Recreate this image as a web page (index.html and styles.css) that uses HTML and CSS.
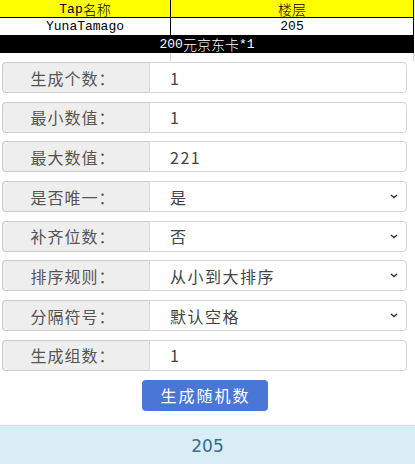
FILE: index.html
```html
<!DOCTYPE html>
<html lang="zh-CN">
<head>
<meta charset="utf-8">
<title>随机数生成器</title>
<link rel="stylesheet" href="styles.css">
</head>
<body>
<div class="sheet">
  <div class="cell head first">Tap<span class="han">名称</span></div>
  <div class="cell head"><span class="han">楼层</span></div>
  <div class="cell first">YunaTamago</div>
  <div class="cell">205</div>
  <div class="cell prize">200<span class="han">元京东卡</span>*1</div>
  <div class="cell blank first"></div>
  <div class="cell blank"></div>
</div>

<form class="generator">
  <div class="field">
    <span class="label">生成个数：</span>
    <div class="control">1</div>
  </div>
  <div class="field">
    <span class="label">最小数值：</span>
    <div class="control">1</div>
  </div>
  <div class="field">
    <span class="label">最大数值：</span>
    <div class="control">221</div>
  </div>
  <div class="field">
    <span class="label">是否唯一：</span>
    <div class="control select">是<svg class="caret" viewBox="0 0 8 5"><path d="M1 1l3 2.6L7 1"/></svg></div>
  </div>
  <div class="field">
    <span class="label">补齐位数：</span>
    <div class="control select">否<svg class="caret" viewBox="0 0 8 5"><path d="M1 1l3 2.6L7 1"/></svg></div>
  </div>
  <div class="field">
    <span class="label">排序规则：</span>
    <div class="control select">从小到大排序<svg class="caret" viewBox="0 0 8 5"><path d="M1 1l3 2.6L7 1"/></svg></div>
  </div>
  <div class="field">
    <span class="label">分隔符号：</span>
    <div class="control select">默认空格<svg class="caret" viewBox="0 0 8 5"><path d="M1 1l3 2.6L7 1"/></svg></div>
  </div>
  <div class="field">
    <span class="label">生成组数：</span>
    <div class="control">1</div>
  </div>
  <div class="actions">
    <button type="button" class="btn">生成随机数</button>
  </div>
</form>

<div class="result">205</div>
</body>
</html>
```

FILE: styles.css
```css
html, body {
  margin: 0;
  padding: 0;
  background: #fff;
}

body {
  width: 415px;
  height: 464px;
  overflow: hidden;
  font-family: "Noto Sans CJK SC", "Noto Sans", sans-serif;
}

/* spreadsheet-like prize table */
.sheet {
  display: grid;
  grid-template-columns: 171px 243px;
  width: 414px;
  font-family: "Liberation Mono", "Noto Sans CJK SC", monospace;
  font-size: 13px;
  color: #000;
}

.han {
  font-family: "Noto Sans CJK SC", sans-serif;
  font-size: 14px;
  font-weight: 300;
  line-height: 1;
}

.cell {
  box-sizing: border-box;
  display: flex;
  align-items: center;
  justify-content: center;
  height: 17px;
  border-right: 1px solid #000;
  white-space: nowrap;
}

.cell.head {
  height: 18px;
  padding-top: 1px;
  background: #ffff00;
  border-bottom: 1px solid #000;
}

.cell.prize {
  grid-column: 1 / span 2;
  height: 18px;
  background: #000;
  color: #fff;
  border-right: 0;
}

.cell.blank {
  height: 8px;
  border-right-color: #d4d4d4;
}

/* form */
.generator {
  margin: 1px 8px 0 2px;
  font-size: 16px;
  color: #555;
}

.field {
  display: flex;
  height: 31px;
  margin-bottom: 8.7px;
}

.label {
  box-sizing: border-box;
  width: 147px;
  flex: none;
  display: flex;
  align-items: center;
  justify-content: center;
  padding-right: 6px;
  letter-spacing: 1px;
  background: #eee;
  border: 1px solid #ccc;
  border-right: 0;
  border-radius: 4px 0 0 4px;
  color: #555;
}

.control {
  box-sizing: border-box;
  flex: 1;
  display: flex;
  align-items: center;
  padding-left: 20px;
  padding-right: 8px;
  letter-spacing: 1.5px;
  background: #fff;
  border: 1px solid #d6d6d6;
  border-radius: 0 4px 4px 0;
  color: #444;
}

.control.select {
  justify-content: space-between;
}

.caret {
  width: 8px;
  height: 5px;
  fill: none;
  stroke: #333;
  stroke-width: 1.4;
}

.actions {
  display: flex;
  justify-content: center;
}

.btn {
  width: 126px;
  height: 31px;
  border: 0;
  border-radius: 4px;
  background: #4a76d8;
  color: #fff;
  font-family: "Noto Sans CJK SC", sans-serif;
  font-size: 16px;
  letter-spacing: 2px;
  text-indent: 2px;
  padding: 0;
}

/* output panel */
.result {
  margin-top: 14px;
  height: 60px;
  padding-top: 9px;
  box-sizing: border-box;
  background: #d9edf7;
  border-top: 1px solid #bce8f1;
  color: #31708f;
  text-align: center;
  font-family: "DejaVu Sans", sans-serif;
  font-size: 17px;
  line-height: 22px;
}
```
